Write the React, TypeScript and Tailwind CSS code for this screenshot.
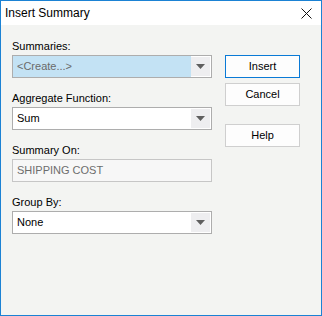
import React from "react";

const font = { fontFamily: '"Liberation Sans", Arial, sans-serif' };

function Arrow() {
  return (
    <div className="w-[19px] h-[19px] mr-[1px] bg-[#eeeef0] flex items-center justify-center">
      <svg width="9" height="5" viewBox="0 0 9 5">
        <polygon points="0,0 9,0 4.5,5" fill="#5f5f5f" />
      </svg>
    </div>
  );
}

function Combo({ text, selected }: { text: string; selected?: boolean }) {
  return (
    <div
      className={
        "h-[23px] w-[200px] border border-[#adadad] flex items-center " +
        (selected ? "bg-[#c3e2f4]" : "bg-white")
      }
    >
      <div
        className={
          "flex-1 pl-[4px] text-[11px] leading-[13px] " +
          (selected ? "text-[#6a6a6a]" : "text-black")
        }
      >
        {text}
      </div>
      <div className="h-full flex items-center bg-white">
        <Arrow />
      </div>
    </div>
  );
}

function Label({ children }: { children: React.ReactNode }) {
  return <div className="h-[15px] text-[11px] leading-[13px] text-black">{children}</div>;
}

function Button({ children, primary }: { children: React.ReactNode; primary?: boolean }) {
  return (
    <div
      className={
        "w-[75px] h-[23px] flex items-center justify-center text-[11px] text-black bg-[#fdfdfd] border " +
        (primary ? "border-[#0a7ad6]" : "border-[#cfcfcf]")
      }
    >
      {children}
    </div>
  );
}

export default function App() {
  return (
    <div style={font} className="w-[322px] h-[316px] border border-[#1b82d4] flex flex-col bg-[#f3f4f2]">
      <div className="h-[24px] bg-white flex items-center justify-between pl-[4px] pr-[9px]">
        <span className="text-[12px] text-black">Insert Summary</span>
        <svg width="11" height="11" viewBox="0 0 11 11">
          <path d="M0.5 0.5 L10.5 10.5 M10.5 0.5 L0.5 10.5" stroke="#111" strokeWidth="1" />
        </svg>
      </div>
      <div className="flex-1 flex pl-[11px] pt-[15px]">
        <div className="w-[200px] flex flex-col">
          <Label>Summaries:</Label>
          <Combo text="<Create...>" selected />
          <div className="h-[14px]" />
          <Label>Aggregate Function:</Label>
          <Combo text="Sum" />
          <div className="h-[14px]" />
          <Label>Summary On:</Label>
          <div className="h-[23px] w-[200px] border border-[#c6c6c6] bg-[#f7f7f7] flex items-center pl-[4px] text-[11px] text-[#6d6d6d]">
            SHIPPING COST
          </div>
          <div className="h-[14px]" />
          <Label>Group By:</Label>
          <Combo text="None" />
        </div>
        <div className="ml-[13px] pt-[15px] flex flex-col">
          <Button primary>Insert</Button>
          <div className="h-[5px]" />
          <Button>Cancel</Button>
          <div className="h-[18px]" />
          <Button>Help</Button>
        </div>
      </div>
    </div>
  );
}
